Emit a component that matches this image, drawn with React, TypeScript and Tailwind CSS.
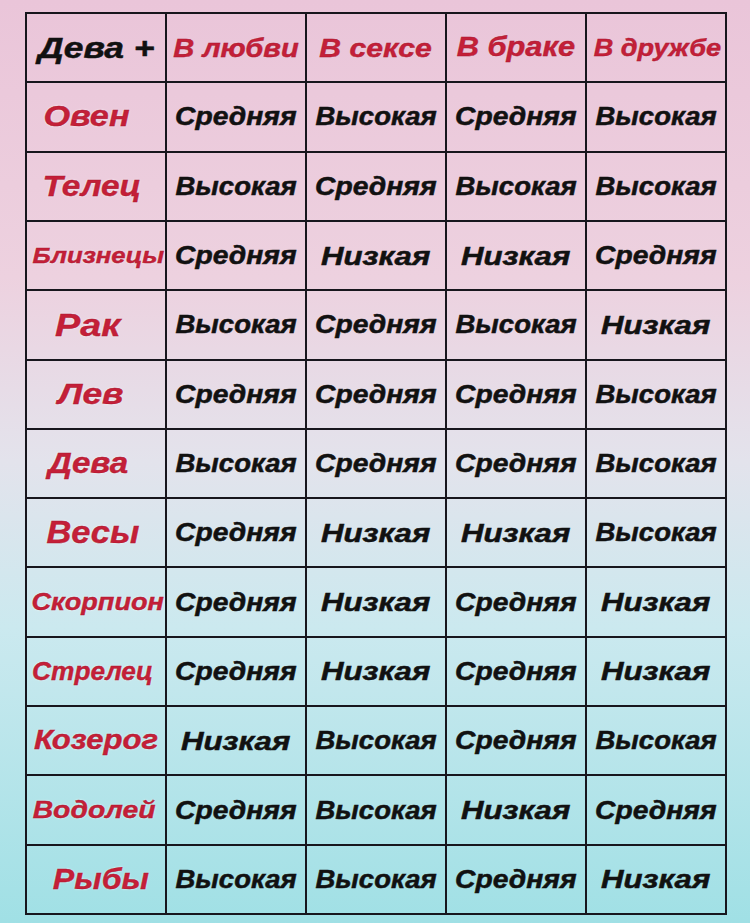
import React from "react";

type Cell = { t: string; c: string };

const header: Cell[] = [
  { t: "Дева +", c: "text-[30px] scale-x-[1.18] text-[#111] [-webkit-text-stroke:0.5px_#111]" },
  { t: "В любви", c: "text-[26px] scale-x-[1.12] text-[#c41f38] [-webkit-text-stroke:0.4px_#a8162f]" },
  { t: "В сексе", c: "text-[26px] scale-x-[1.16] text-[#c41f38] [-webkit-text-stroke:0.4px_#a8162f]" },
  { t: "В браке", c: "text-[27px] scale-x-[1.14] text-[#c41f38] [-webkit-text-stroke:0.4px_#a8162f]" },
  { t: "В дружбе", c: "text-[24px] scale-x-[1.13] text-[#c41f38] translate-x-[1px] [-webkit-text-stroke:0.4px_#a8162f]" },
];

const signs: Cell[] = [
  { t: "Овен", c: "text-[29px] scale-x-[1.18] -translate-x-[10px]" },
  { t: "Телец", c: "text-[29px] scale-x-[1.15] -translate-x-[4px]" },
  { t: "Близнецы", c: "text-[22px] scale-x-[1.17] translate-x-[2px]" },
  { t: "Рак", c: "text-[32px] scale-x-[1.18] -translate-x-[8px]" },
  { t: "Лев", c: "text-[29px] scale-x-[1.22] -translate-x-[5px]" },
  { t: "Дева", c: "text-[29px] scale-x-[1.14] -translate-x-[8px]" },
  { t: "Весы", c: "text-[31px] scale-x-[1.11] -translate-x-[3px]" },
  { t: "Скорпион", c: "text-[24px] scale-x-[1.13] translate-x-[2px]" },
  { t: "Стрелец", c: "text-[25px] scale-x-[1.05] -translate-x-[3px]" },
  { t: "Козерог", c: "text-[27px] scale-x-[1.15]" },
  { t: "Водолей", c: "text-[24px] scale-x-[1.18] -translate-x-[2px]" },
  { t: "Рыбы", c: "text-[30px] scale-x-[1.07] translate-x-[5px]" },
];

const values: string[][] = [
  ["Средняя", "Высокая", "Средняя", "Высокая"],
  ["Высокая", "Средняя", "Высокая", "Высокая"],
  ["Средняя", "Низкая", "Низкая", "Средняя"],
  ["Высокая", "Средняя", "Высокая", "Низкая"],
  ["Средняя", "Средняя", "Средняя", "Высокая"],
  ["Высокая", "Средняя", "Средняя", "Высокая"],
  ["Средняя", "Низкая", "Низкая", "Высокая"],
  ["Средняя", "Низкая", "Средняя", "Низкая"],
  ["Средняя", "Низкая", "Средняя", "Низкая"],
  ["Низкая", "Высокая", "Средняя", "Высокая"],
  ["Средняя", "Высокая", "Низкая", "Средняя"],
  ["Высокая", "Высокая", "Средняя", "Низкая"],
];

function valueClass(v: string) {
  if (v === "Низкая") return "text-[26px] scale-x-[1.2]";
  if (v === "Высокая") return "text-[25px] scale-x-[1.1]";
  return "text-[25px] scale-x-[1.13]";
}

function CellBox({ children }: { children: React.ReactNode }) {
  return (
    <div className="flex items-center justify-center overflow-visible border-r-2 border-b-2 border-[#17161d]">
      {children}
    </div>
  );
}

export default function App() {
  return (
    <div className="w-[750px] h-[923px] overflow-hidden bg-[linear-gradient(180deg,#eac5d9_0%,#edd1df_30%,#e3e3ec_50%,#cbe9ef_68%,#a0e0e5_100%)] pt-[12px] pl-[25px] [font-family:'Liberation_Sans',Arial,sans-serif] font-bold italic">
      <div className="grid grid-cols-5 grid-rows-[repeat(13,1fr)] w-[702px] h-[903px] border-l-2 border-t-2 border-[#17161d]">
        {header.map((h, i) => (
          <CellBox key={"h" + i}>
            <span className={"inline-block whitespace-nowrap leading-none " + h.c}>{h.t}</span>
          </CellBox>
        ))}
        {signs.map((s, r) => (
          <React.Fragment key={"r" + r}>
            <CellBox>
              <span
                className={
                  "inline-block whitespace-nowrap leading-none text-[#c41f38] [-webkit-text-stroke:0.4px_#a8162f] [text-shadow:0_0_2px_rgba(255,255,255,0.95)] " +
                  s.c
                }
              >
                {s.t}
              </span>
            </CellBox>
            {values[r].map((v, k) => (
              <CellBox key={k}>
                <span
                  className={
                    "inline-block whitespace-nowrap leading-none text-[#111] [-webkit-text-stroke:0.5px_#111] " +
                    valueClass(v)
                  }
                >
                  {v}
                </span>
              </CellBox>
            ))}
          </React.Fragment>
        ))}
      </div>
    </div>
  );
}
